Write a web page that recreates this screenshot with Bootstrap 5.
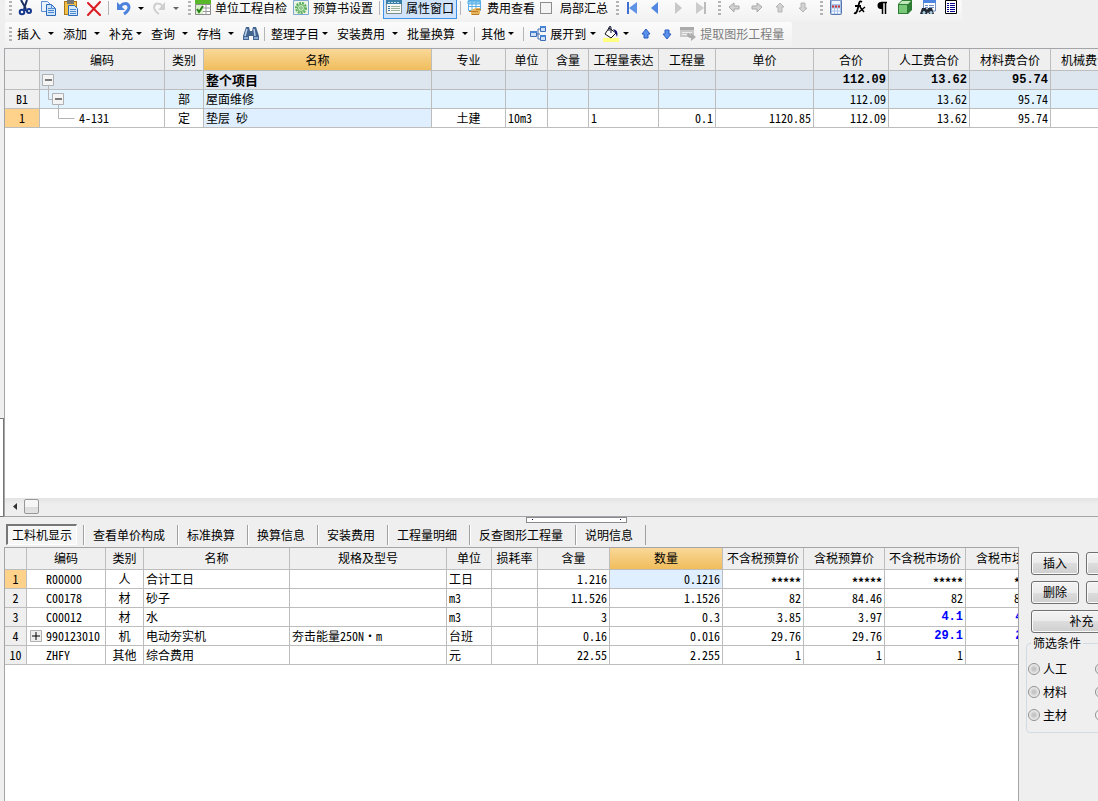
<!DOCTYPE html>
<html lang="zh-CN">
<head>
<meta charset="utf-8">
<meta name="viewport" content="width=device-width, initial-scale=1">
<title>预算书</title>
<link href="https://cdn.jsdelivr.net/npm/bootstrap@5.3.0/dist/css/bootstrap.min.css" rel="stylesheet">
<style>
  body { font: 12px/18px "Noto Sans CJK SC", sans-serif; color: #000; background: #efefef; }
  button { font: inherit; color: inherit; }
  svg { display: block; flex: none; }

  /* toolbars */
  .toolbars { padding-left: 5px; height: 48px; }
  .strip { width: max-content; background: linear-gradient(#fbfbfb, #f1f1f1); border-radius: 2px; }
  .strip-a { height: 22px; padding-bottom: 6px; }
  .strip-b { height: 25px; padding: 0 5px 2px 0; }
  .tool { border: 0; background: none; padding: 0 3px; height: 20px; gap: 4px; white-space: nowrap; }
  .tool.ico { width: 23px; padding: 0; justify-content: center; }
  .tool.slim { width: 21px; }
  .tool.pressed { background: #cfe4fa; outline: 1px solid #3c92e6; outline-offset: -1px; height: 22px; }
  .tool.off { color: #7d7d7d; }
  .tool.drop { padding-right: 6px; gap: 7px; }
  .tool.tight { gap: 3px; }
  .arrow { border: 3px solid transparent; border-top-color: #000; border-bottom: 0; flex: none; width: 6px; }
  .arrow-box { width: 12px; }
  .arrow.off { border-top-color: #666; }
  .grip { width: 3px; height: 14px; background: repeating-linear-gradient(#b4b4b4 0 2px, transparent 2px 4px); margin: 0 1px 0 6px; }
  .grip.first { margin-left: 4px; }
  .strip-b .grip.first { margin-right: 2px; }
  .rule { width: 1px; height: 14px; background: #b5b5b5; margin: 0 3px; }
  .check-tool { padding: 0 2px; }
  .tick { width: 12px; height: 12px; appearance: none; border: 1px solid #8c8c8c; background: #f4f4f4; margin: 0; }

  /* panes */
  .pane-top { flex: 468 1 0; min-height: 0; }
  .pane-low { flex: 284 1 0; min-height: 0; }
  .gutter { width: 4px; flex: none; }
  .dock { width: 4px; height: 99px; border: 1px solid #777; border-left: 0; background: #fff; }
  .frame { border: 1px solid #a5a5a9; background: #fff; min-width: 0; }
  .pane-top .frame { border-right: 0; }

  /* data grids */
  .sheet { table-layout: fixed; border-collapse: separate; border-spacing: 0; width: 1px; font-feature-settings: "hwid"; }
  .sheet th, .sheet td { height: 19px; padding: 0 2px; line-height: 18px; border-right: 1px solid #bdbdbd; border-bottom: 1px solid #bdbdbd; overflow: hidden; white-space: nowrap; font-weight: 400; }
  .sheet thead th { height: 22px; line-height: 20px; padding: 0; background: #efefef; text-align: center; }
  .sheet thead th.hot { background: linear-gradient(#f9d898, #f0bd5c); }
  .sheet tbody th { background: #efefef; text-align: center; }
  .sheet tbody th.hot { background: #ffd28c; }
  .sheet .n { text-align: right; }
  .sheet .c { text-align: center; }
  .sheet .code { padding: 0 0 0 19px; }
  .sheet .tree { padding: 0; }
  .sheet .sel { background: #dfefff; }
  .sheet .total td { background: #dde5ee; font-weight: 700; font-size: 13px; }
  .sheet .part td { background: #e1f3ff; }
  .sheet .total .n, .sheet td.price { font: 700 12px/18px "Liberation Mono", monospace; }
  .sheet td.price { color: #00f; }
  .sheet td.stars { padding-top: 5px; line-height: 13px; font-weight: 700; }

  .scroller { height: 18px; background: linear-gradient(#e3e3e3, #eee 6px); }
  .scroller button { border: 0; background: none; width: 19px; padding: 0; }
  .thumb { width: 15px; height: 15px; border: 1px solid #979797; border-radius: 2px; background: linear-gradient(#f6f6f6 50%, #dcdcdc 50%, #e4e4e4); }
  .splitter { height: 6px; }
  .handle { width: 101px; height: 6px; border: 1px solid #8a8a90; background: #fff; padding: 0 5px; margin-left: 54px; }
  .handle i { width: 1px; height: 1px; background: #006; }

  .tabs { padding: 0 0 0 6px; height: 24px; }
  .tab-item { border: 0; border-left: 1px solid #a0a0a0; background: none; box-shadow: inset 1px 0 #fff; height: 20px; padding: 0 12px 0 9px; white-space: nowrap; }
  .tab-item.end { border-right: 1px solid #a0a0a0; }
  .tab-item.on { border: 1px solid #fff; border-top: 2px solid #777; border-left: 2px solid #777; background: #f7f7f7; box-shadow: none; padding: 0 4px; margin-right: 6px; height: 21px; }

  /* side panel */
  .side { width: 79px; flex: none; overflow: hidden; padding-top: 5px; }
  .side-in { width: 120px; padding-left: 12px; }
  .push-row { gap: 7px; margin-bottom: 6px; }
  .push { border: 1px solid #707070; border-radius: 3px; background: linear-gradient(#f3f3f3, #ebebeb 50%, #dddddd 50%, #cfcfcf); box-shadow: inset 0 0 0 1px #fafafa; height: 23px; width: 48px; padding: 0; line-height: 20px; flex: none; }
  .push.wide { width: 101px; display: block; }
  .filter { border: 1px solid #d0dbe5; border-radius: 4px; margin: 10px 0 0 -5px; width: 140px; height: 90px; }
  .filter legend { font-size: 12px; line-height: 16px; width: auto; padding: 0 2px; margin: -9px 0 0 4px; background: #efefef; float: left; }
  .filter .opts { clear: both; display: grid; grid-template-columns: 67px 60px; row-gap: 5px; padding: 9px 0 0 1px; }
  .dot { appearance: none; width: 12px; height: 12px; border: 1px solid #8e8f8f; border-radius: 50%; background: radial-gradient(#c4c4c4 20%, #f4f4f4 75%); margin: 0 3px 0 0; flex: none; }
  .dot:checked { background: radial-gradient(#23688f 25%, #f4f4f4 50%); }
</style>
</head>
<body class="vh-100 d-flex flex-column overflow-hidden">

<header class="toolbars flex-shrink-0 overflow-hidden">
  <div class="strip strip-a d-flex align-items-center">
    <span class="grip first"></span>
    <button class="tool ico d-flex align-items-center" aria-label="剪切"><svg width="16" height="16"><path d="M4 0l5 9M10 0L7 9" stroke="#1b2f63" stroke-width="2"/><path d="M7 9l3 2" stroke="#15378c" stroke-width="2"/><circle cx="5" cy="12" r="2.3" fill="none" stroke="#15378c" stroke-width="2"/><circle cx="12" cy="11" r="2" fill="none" stroke="#15378c" stroke-width="2"/></svg></button>
    <button class="tool ico d-flex align-items-center" aria-label="复制"><svg width="16" height="16"><path d="M1.500 1.500h6l3 3v7h-9z" fill="#e8f2fd" stroke="#5d8fd0"/><path d="M6.500 4.500h5l4 4v7h-9z" fill="#cfe4fb" stroke="#2b6ab8"/><path d="M11.500 4.500v4h4M8 8.500h3M8 10.500h6M8 12.500h6" fill="none" stroke="#4b88d0"/></svg></button>
    <button class="tool ico d-flex align-items-center" aria-label="粘贴"><svg width="16" height="16"><rect x="1.500" y="1.500" width="12" height="13" fill="#f4bf45" stroke="#a8761c"/><path d="M4 0h7v4H4z" fill="#777"/><path d="M5.500 5.500h6l3 3v7h-9z" fill="#d6e8fb" stroke="#2b6ab8"/><path d="M7 9.500h6M7 11.500h6M7 13.500h6" stroke="#4b88d0"/></svg></button>
    <button class="tool ico d-flex align-items-center" aria-label="删除"><svg width="16" height="16"><path d="M2 3l12 12M14 2L2 15" stroke="#dc1c24" stroke-width="2" stroke-linecap="round"/></svg></button>
    <span class="rule"></span>
    <button class="tool ico d-flex align-items-center" aria-label="撤销"><svg width="16" height="16"><path d="M4 7c2-4 8-5 9 0 0 3-2 5-5 7" fill="none" stroke="#4a82dc" stroke-width="3"/><path d="M1 2v8h8z" fill="#4a82dc"/></svg></button>
    <span class="arrow-box d-flex justify-content-center"><span class="arrow"></span></span>
    <button class="tool ico d-flex align-items-center" aria-label="恢复"><svg width="16" height="16"><path d="M12 7C10 3 4 2 3 7c0 3 2 5 5 7" fill="none" stroke="#cfcfcf" stroke-width="2"/><path d="M14 2v8H7z" fill="#cfcfcf"/></svg></button>
    <span class="arrow-box d-flex justify-content-center"><span class="arrow off"></span></span>
    <span class="grip"></span>
    <button class="tool d-flex align-items-center"><svg width="16" height="16"><path d="M0 0h16v4H0z" fill="#58b827"/><path d="M.5 4.500h15v10H.5z" fill="#fff" stroke="#888"/><path d="M0 8h16M0 11.500h16M6 4v11M11 4v11" stroke="#999"/><path d="M1 5h7v9H1z" fill="#d8f0c8"/><path d="M2 9l2 3 4-6" fill="none" stroke="#278016" stroke-width="2"/></svg>单位工程自检</button>
    <button class="tool d-flex align-items-center"><svg width="16" height="16"><path d="M.5.500h15v14H.5z" fill="#e9f4e4" stroke="#7ea8cf"/><circle cx="8" cy="8" r="5" fill="none" stroke="#57ad57" stroke-width="2" stroke-dasharray="2 1"/><circle cx="8" cy="8" r="3.500" fill="#cbe9c5" stroke="#57ad57"/><circle cx="8" cy="8" r="1.200" fill="#fff" stroke="#57ad57"/></svg>预算书设置</button>
    <span class="rule"></span>
    <button class="tool pressed d-flex align-items-center"><svg width="16" height="16"><path d="M.5.500h15v13H.5z" fill="#f7f9f7" stroke="#7c8c8c"/><path d="M0 0h16v4H0z" fill="#3981a8"/><path d="M2 2.500h12" stroke="#bde" stroke-dasharray="2 1"/><path d="M2 6.500h2M2 8.500h2M2 10.500h2" stroke="#37a"/><path d="M5 6.500h9M5 8.500h9M5 10.500h9" stroke="#9db59d"/></svg>属性窗口</button>
    <span class="rule"></span>
    <button class="tool d-flex align-items-center"><svg width="16" height="16"><path d="M1.500.500h12v10h-12z" fill="#fff" stroke="#58aee4"/><path d="M1 1h12v3H1zM1 6.500h12M5 1v9M9 1v9" fill="#8fcdf4" stroke="#58aee4"/><path d="M4 10l5-2h4v6H9l-5 1z" fill="#e8b45a"/><path d="M2 11.500h9M9 9.500h5M5 14.500h7" stroke="#b87d2c"/></svg>费用查看</button>
    <label class="check-tool d-flex align-items-center gap-2"><input type="checkbox" class="tick">局部汇总</label>
    <span class="grip"></span>
    <button class="tool ico d-flex align-items-center" aria-label="首条"><svg width="16" height="16"><path d="M4 2v12" stroke="#3f6fd0" stroke-width="2"/><path d="M13 2v12L5 8z" fill="#5f93e6"/></svg></button>
    <button class="tool ico d-flex align-items-center" aria-label="上一条"><svg width="16" height="16"><path d="M11 2v12L4 8z" fill="#5288e2"/></svg></button>
    <button class="tool ico d-flex align-items-center" aria-label="下一条"><svg width="16" height="16"><path d="M5 2v12l7-6z" fill="#c8c8c8"/></svg></button>
    <button class="tool ico d-flex align-items-center" aria-label="末条"><svg width="16" height="16"><path d="M3 2v12l8-6z" fill="#ccc"/><path d="M12 2v12" stroke="#bbb" stroke-width="2"/></svg></button>
    <span class="grip"></span>
    <button class="tool ico d-flex align-items-center" aria-label="左移"><svg width="16" height="16"><path d="M3 7l5-4v3h5v3H8v3z" fill="#d2d2d2" stroke="#a8a8a8"/></svg></button>
    <button class="tool ico d-flex align-items-center" aria-label="右移"><svg width="16" height="16"><path d="M13 7L8 3v3H3v3h5v3z" fill="#d2d2d2" stroke="#a8a8a8"/></svg></button>
    <button class="tool ico d-flex align-items-center" aria-label="上移"><svg width="16" height="16"><path d="M8 3l4 4h-2v5H6V7H4z" fill="#d2d2d2" stroke="#b4b4b4"/></svg></button>
    <button class="tool ico d-flex align-items-center" aria-label="下移"><svg width="16" height="16"><path d="M8 12L4 8h2V3h4v5h2z" fill="#d2d2d2" stroke="#b4b4b4"/></svg></button>
    <span class="grip"></span>
    <button class="tool ico d-flex align-items-center" aria-label="计算器"><svg width="16" height="16"><rect x="2.500" y="0" width="11" height="14.500" rx="1" fill="#a9c2ea" stroke="#5877ae"/><path d="M4 1h8v3H4z" fill="#edf4fd"/><path d="M4 6.500h8" stroke="#c33" stroke-width="2" stroke-dasharray="2 1"/><path d="M4 9.500h8M4 12.500h8" stroke="#f5f8ff" stroke-width="2" stroke-dasharray="2 1"/></svg></button>
    <button class="tool ico d-flex align-items-center" aria-label="函数"><svg width="16" height="16"><path d="M11 2C8 0 8 4 7 8s-2 6-4 5M4 6h6" fill="none" stroke="#000" stroke-width="1.800"/><path d="M9 7l4 5M14 7l-6 5" stroke="#000" stroke-width="1.500"/></svg></button>
    <button class="tool ico d-flex align-items-center" aria-label="段落"><svg width="16" height="16"><path d="M9 2H7a3.500 3.500 0 0 0 0 7h2z"/><path d="M8.500 2v12M11.500 2v12M7 2.500h6" stroke="#000" stroke-width="1.500"/></svg></button>
    <button class="tool ico d-flex align-items-center" aria-label="三维"><svg width="16" height="16"><path d="M1 4l4-4h10v10l-4 4H1z" fill="#2f7d35"/><path d="M2 5h8v8H2z" fill="#79c779"/><path d="M2 4l3-3h9l-3 3z" fill="#c0e8bb"/></svg></button>
    <button class="tool ico d-flex align-items-center" aria-label="查找"><svg width="16" height="16"><path d="M3.500 0h12v11h-12z" fill="#fafcff" stroke="#7390c4"/><path d="M3 0h13v3H3z" fill="#4c86e0"/><path d="M5 5.500h3M9 5.500h5M5 7.500h3M9 7.500h5" stroke="#7390c4"/><path d="M2 8h4l1 2 1-2h4l2 6H9l-1-2-1 2H0z" fill="#222b38"/><circle cx="4" cy="12.500" r="1.500" fill="#acd"/><circle cx="11" cy="12.500" r="1.500" fill="#acd"/></svg></button>
    <button class="tool ico d-flex align-items-center" aria-label="列表"><svg width="16" height="16"><path d="M2.500.500h11v13h-11z" fill="#fff" stroke="#000"/><path d="M4 3.500h2M7 3.500h5M4 5.500h2M7 5.500h5M4 7.500h2M7 7.500h5M4 9.500h2M7 9.500h5M4 11.500h2M7 11.500h5" stroke="#00008b"/></svg></button>
  </div>
  <div class="strip strip-b d-flex align-items-center">
    <span class="grip first"></span>
    <button class="tool drop d-flex align-items-center">插入<span class="arrow"></span></button>
    <button class="tool drop d-flex align-items-center">添加<span class="arrow"></span></button>
    <button class="tool drop tight d-flex align-items-center">补充<span class="arrow"></span></button>
    <button class="tool drop d-flex align-items-center">查询<span class="arrow"></span></button>
    <button class="tool drop d-flex align-items-center">存档<span class="arrow"></span></button>
    <button class="tool ico slim d-flex align-items-center" aria-label="查找"><svg width="16" height="16"><path d="M3 1h3l1 4h2l1-4h3l3 9v4h-6v-4H6v4H0v-4z" fill="#43658f"/><path d="M4 3L2 10M11 3l1 7" stroke="#b8d0ec" stroke-width="1.500"/><path d="M1 11h4v2H1zM11 11h4v2h-4z" fill="#87a9d4"/></svg></button>
    <span class="rule"></span>
    <button class="tool drop tight d-flex align-items-center">整理子目<span class="arrow"></span></button>
    <button class="tool drop d-flex align-items-center">安装费用<span class="arrow"></span></button>
    <button class="tool drop d-flex align-items-center">批量换算<span class="arrow"></span></button>
    <span class="rule ms-0"></span>
    <button class="tool drop tight d-flex align-items-center">其他<span class="arrow"></span></button>
    <span class="rule"></span>
    <button class="tool drop d-flex align-items-center gap-1 pe-1"><svg width="16" height="16"><path d="M5 8h5M8 3v10M8 3h2M8 13h2" fill="none" stroke="#456fae"/><path d="M.5 5.500h6v5h-6zM10.500.500h5v5h-5zM10.500 9.500h5v5h-5z" fill="#cfe0f7" stroke="#3a6cb8"/><path d="M0 5h7v2H0zM10 0h6v2h-6zM10 9h6v2h-6z" fill="#4a84d4"/></svg>展开到<span class="arrow"></span></button>
    <button class="tool drop d-flex align-items-center gap-1" aria-label="填充颜色"><svg width="16" height="16"><path d="M0 12h16v4H0z" fill="#ffff80"/><path d="M6 2l7 5-5 5-6-4z" fill="#fff" stroke="#111"/><path d="M6 5V1q2-2 2 1v5" fill="none" stroke="#113"/><path d="M10 3q6 1 4 8l-2-5z" fill="#10107c"/></svg><span class="arrow"></span></button>
    <button class="tool ico slim d-flex align-items-center" aria-label="上移"><svg width="16" height="16"><path d="M8 3l4 5h-2v4H6V8H4z" fill="#5c92ee" stroke="#2a5cc0"/></svg></button>
    <button class="tool ico slim d-flex align-items-center" aria-label="下移"><svg width="16" height="16"><path d="M8 13L4 8h2V4h4v4h2z" fill="#5c92ee" stroke="#2a5cc0"/></svg></button>
    <button class="tool off d-flex align-items-center"><svg width="16" height="16"><path d="M0 1h14v10H0z" fill="#c9c9c9"/><path d="M0 1h14v3H0z" fill="#aaa"/><path d="M2 6.500h10M2 8.500h5" stroke="#eee"/><path d="M7 8q0 4 4 4v3l5-4-5-4v2q-2 0-2-2z" fill="#adadad"/></svg>提取图形工程量</button>
  </div>
</header>

<section class="pane-top d-flex">
  <div class="gutter d-flex flex-column justify-content-end"><div class="dock"></div></div>
  <div class="frame flex-grow-1 d-flex flex-column overflow-hidden">
    <div class="flex-grow-1 overflow-hidden">
      <table class="sheet">
        <colgroup><col style="width:35px"><col style="width:125px"><col style="width:39px"><col style="width:228px"><col style="width:74px"><col style="width:42px"><col style="width:41px"><col style="width:70px"><col style="width:57px"><col style="width:98px"><col style="width:75px"><col style="width:81px"><col style="width:81px"><col style="width:81px"></colgroup>
        <thead><tr><th></th><th>编码</th><th>类别</th><th class="hot">名称</th><th>专业</th><th>单位</th><th>含量</th><th>工程量表达</th><th>工程量</th><th>单价</th><th>合价</th><th>人工费合价</th><th>材料费合价</th><th>机械费合价</th></tr></thead>
        <tbody>
          <tr class="total"><th></th><td class="tree"><svg width="124" height="18"><path d="M2.500 3.500h11v11h-11z" fill="#f4f4f4" stroke="#b0b0b0"/><path d="M5 9h7" stroke="#000"/><path d="M8.500 15v3" stroke="#b5b5b5"/></svg></td><td></td><td>整个项目</td><td></td><td></td><td></td><td></td><td></td><td></td><td class="n">112.09</td><td class="n">13.62</td><td class="n">95.74</td><td></td></tr>
          <tr class="part"><th>B1</th><td class="tree"><svg width="124" height="18"><path d="M8.500 0v9.500h4M18.500 15v3" fill="none" stroke="#b5b5b5"/><path d="M12.500 3.500h11v11h-11z" fill="#f4f4f4" stroke="#b0b0b0"/><path d="M15 9h7" stroke="#000"/></svg></td><td class="c">部</td><td>屋面维修</td><td></td><td></td><td></td><td></td><td></td><td></td><td class="n">112.09</td><td class="n">13.62</td><td class="n">95.74</td><td></td></tr>
          <tr><th class="hot">1</th><td class="tree"><div class="d-flex"><svg width="39" height="18"><path d="M18.500 0v9.500h16" fill="none" stroke="#b5b5b5"/></svg>4-131</div></td><td class="c">定</td><td class="sel">垫层 砂</td><td class="c">土建</td><td>10m3</td><td></td><td>1</td><td class="n">0.1</td><td class="n">1120.85</td><td class="n">112.09</td><td class="n">13.62</td><td class="n">95.74</td><td></td></tr>
        </tbody>
      </table>
    </div>
    <div class="scroller d-flex align-items-center flex-shrink-0">
      <button aria-label="向左滚动" class="d-flex justify-content-center"><svg width="6" height="7"><path d="M5 0v7L1 3.500z" fill="#333"/></svg></button>
      <div class="thumb"></div>
    </div>
  </div>
</section>

<section class="pane-low d-flex flex-column">
  <div class="splitter d-flex justify-content-center flex-shrink-0"><div class="handle d-flex justify-content-between align-items-center"><i></i><i></i></div></div>
  <nav class="tabs d-flex flex-shrink-0 align-items-center" role="tablist">
    <button class="tab-item on" role="tab">工料机显示</button>
    <button class="tab-item" role="tab">查看单价构成</button>
    <button class="tab-item" role="tab">标准换算</button>
    <button class="tab-item" role="tab">换算信息</button>
    <button class="tab-item" role="tab">安装费用</button>
    <button class="tab-item" role="tab">工程量明细</button>
    <button class="tab-item" role="tab">反查图形工程量</button>
    <button class="tab-item end" role="tab">说明信息</button>
  </nav>
  <div class="d-flex flex-grow-1 overflow-hidden">
    <div class="gutter"></div>
    <div class="frame flex-grow-1 overflow-hidden border-bottom-0">
      <table class="sheet">
        <colgroup><col style="width:22px"><col style="width:79px"><col style="width:38px"><col style="width:146px"><col style="width:157px"><col style="width:45px"><col style="width:46px"><col style="width:72px"><col style="width:113px"><col style="width:81px"><col style="width:81px"><col style="width:81px"><col style="width:81px"></colgroup>
        <thead><tr><th></th><th>编码</th><th>类别</th><th>名称</th><th>规格及型号</th><th>单位</th><th>损耗率</th><th>含量</th><th class="hot">数量</th><th>不含税预算价</th><th>含税预算价</th><th>不含税市场价</th><th>含税市场价</th></tr></thead>
        <tbody>
          <tr><th class="hot">1</th><td class="code">R00000</td><td class="c">人</td><td>合计工日</td><td></td><td>工日</td><td></td><td class="n">1.216</td><td class="n sel">0.1216</td><td class="n stars">*****</td><td class="n stars">*****</td><td class="n stars">*****</td><td class="n stars">*****</td></tr>
          <tr><th>2</th><td class="code">C00178</td><td class="c">材</td><td>砂子</td><td></td><td>m3</td><td></td><td class="n">11.526</td><td class="n">1.1526</td><td class="n">82</td><td class="n">84.46</td><td class="n">82</td><td class="n">84.46</td></tr>
          <tr><th>3</th><td class="code">C00012</td><td class="c">材</td><td>水</td><td></td><td>m3</td><td></td><td class="n">3</td><td class="n">0.3</td><td class="n">3.85</td><td class="n">3.97</td><td class="n price">4.1</td><td class="n price">4.22</td></tr>
          <tr><th>4</th><td class="tree"><div class="d-flex"><svg width="19" height="18"><path d="M3.500 3.500h11v11h-11z" fill="#eee" stroke="#b0b0b0"/><path d="M5 9h8M9 5v8" stroke="#000"/></svg>990123010</div></td><td class="c">机</td><td>电动夯实机</td><td>夯击能量250N·m</td><td>台班</td><td></td><td class="n">0.16</td><td class="n">0.016</td><td class="n">29.76</td><td class="n">29.76</td><td class="n price">29.1</td><td class="n price">29.1</td></tr>
          <tr><th>10</th><td class="code">ZHFY</td><td class="c">其他</td><td>综合费用</td><td></td><td>元</td><td></td><td class="n">22.55</td><td class="n">2.255</td><td class="n">1</td><td class="n">1</td><td class="n">1</td><td class="n">1</td></tr>
        </tbody>
      </table>
    </div>
    <aside class="side">
      <div class="side-in">
        <div class="push-row d-flex"><button class="push">插入</button><button class="push" aria-label="更多"></button></div>
        <div class="push-row d-flex"><button class="push">删除</button><button class="push">查询</button></div>
        <button class="push wide">补充</button>
        <fieldset class="filter">
          <legend>筛选条件</legend>
          <div class="opts">
            <label class="d-flex align-items-center"><input class="dot" type="radio" name="f">人工</label><input class="dot align-self-center" type="radio" name="f" aria-label="机械">
            <label class="d-flex align-items-center"><input class="dot" type="radio" name="f">材料</label><input class="dot align-self-center" type="radio" name="f" aria-label="设备">
            <label class="d-flex align-items-center"><input class="dot" type="radio" name="f">主材</label><input class="dot align-self-center" type="radio" name="f" aria-label="所有" checked>
          </div>
        </fieldset>
      </div>
    </aside>
  </div>
</section>
<script src="https://cdn.jsdelivr.net/npm/bootstrap@5.3.0/dist/js/bootstrap.bundle.min.js"></script>
</body>
</html>
